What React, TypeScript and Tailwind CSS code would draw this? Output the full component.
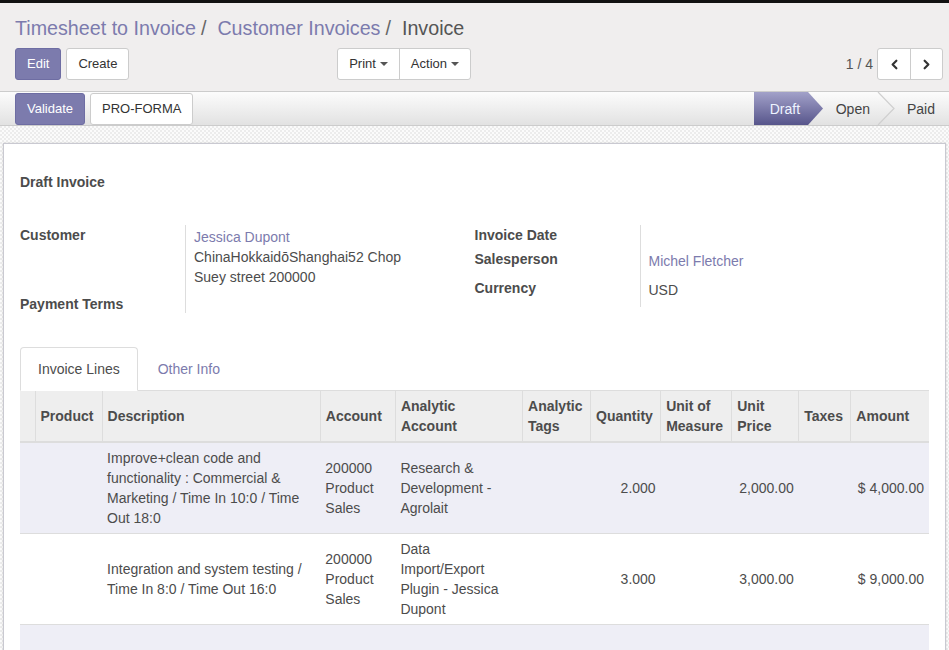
import React from 'react';
import { ChevronLeft, ChevronRight } from 'lucide-react';

interface Line {
  product: string;
  description: string;
  account: string;
  analytic: string;
  tags: string;
  quantity: string;
  uom: string;
  price: string;
  taxes: string;
  amount: string;
}

const lines: Line[] = [
  {
    product: '',
    description: 'Improve+clean code and functionality : Commercial & Marketing / Time In 10:0 / Time Out 18:0',
    account: '200000 Product Sales',
    analytic: 'Research & Development - Agrolait',
    tags: '',
    quantity: '2.000',
    uom: '',
    price: '2,000.00',
    taxes: '',
    amount: '$ 4,000.00',
  },
  {
    product: '',
    description: 'Integration and system testing / Time In 8:0 / Time Out 16:0',
    account: '200000 Product Sales',
    analytic: 'Data Import/Export Plugin - Jessica Dupont',
    tags: '',
    quantity: '3.000',
    uom: '',
    price: '3,000.00',
    taxes: '',
    amount: '$ 9,000.00',
  },
];

const Caret = () => (
  <span className="inline-block ml-[4px] w-0 h-0 border-x-[4px] border-x-transparent border-t-[4px] border-t-[#555] align-middle" />
);

const App: React.FC = () => {
  return (
    <div className="min-h-screen w-[949px] font-['Liberation_Sans',Arial,sans-serif] text-[14px] leading-5 text-[#4c4c4c] bg-[image:repeating-conic-gradient(#ececec_0_25%,#fbfbfb_0_50%)] bg-[length:4px_4px]">
      <div className="h-[3px] bg-[#111]" />

      {/* control panel */}
      <div className="bg-[#f0eeee] border-b border-[#ccc] pl-[15px] pr-[6px] pt-[11px] pb-[11px]">
        <div className="h-[28px] leading-[28px] text-[19.7px] whitespace-nowrap">
          <span className="text-[#7c7bad]">Timesheet to Invoice</span>
          <span className="pl-[5px] pr-[11px] text-[#666]">/</span>
          <span className="text-[#7c7bad]">Customer Invoices</span>
          <span className="pl-[5px] pr-[11px] text-[#666]">/</span>
          <span className="text-[#555]">Invoice</span>
        </div>
        <div className="mt-[6px] flex h-[32px] text-[13px]">
          <div className="flex w-[456px]">
            <button className="h-[32px] px-[11px] rounded-[3px] border border-[#6e6da3] bg-[#7c7bad] text-white">Edit</button>
            <button className="ml-[5px] h-[32px] px-[11px] rounded-[3px] border border-[#ccc] bg-white text-[#333]">Create</button>
            <div className="ml-auto flex rounded-[3px] border border-[#ccc] bg-white text-[#333]">
              <button className="h-[30px] px-[11px] flex items-center">Print<Caret /></button>
              <button className="h-[30px] px-[11px] flex items-center border-l border-[#ccc]">Action<Caret /></button>
            </div>
          </div>
          <div className="flex flex-1 items-center justify-end">
            <span className="text-[14px] text-[#555] mr-[4px]">1 / 4</span>
            <div className="flex rounded-[3px] border border-[#ccc] bg-white h-[32px]">
              <button className="w-[32px] flex items-center justify-center text-[#333]">
                <ChevronLeft size={15} strokeWidth={3.5} />
              </button>
              <button className="w-[32px] flex items-center justify-center border-l border-[#ccc] text-[#333]">
                <ChevronRight size={15} strokeWidth={3.5} />
              </button>
            </div>
          </div>
        </div>
      </div>

      {/* status bar */}
      <div className="flex h-[34px] items-center border-b border-[#ccc] bg-linear-to-b from-[#fcfcfc] to-[#e2e2e2] pl-[15px] text-[13px]">
        <button className="h-[32px] px-[11px] rounded-[3px] border border-[#6e6da3] bg-[#7c7bad] text-white">Validate</button>
        <button className="ml-[5px] h-[32px] px-[11px] rounded-[3px] border border-[#ccc] bg-white text-[#333]">PRO-FORMA</button>
        <div className="ml-auto flex h-full items-center text-[14px]">
          <div className="relative h-full w-[69px] flex items-center pl-[16px]">
            <svg className="absolute inset-0" width="69" height="33" viewBox="0 0 69 33">
              <defs>
                <linearGradient id="draftGrad" x1="0" y1="0" x2="0" y2="1">
                  <stop offset="0" stopColor="#a2a1c9" />
                  <stop offset="1" stopColor="#57558b" />
                </linearGradient>
              </defs>
              <polygon points="0,0 54,0 69,16.5 54,33 0,33" fill="url(#draftGrad)" />
            </svg>
            <span className="relative text-[#eef3ff]">Draft</span>
          </div>
          <span className="ml-[13px] text-[#444]">Open</span>
          <svg className="ml-[7px]" width="18" height="33" viewBox="0 0 18 33">
            <polyline points="1,0 17,16.5 1,33" fill="none" stroke="#cfcfcf" strokeWidth="1.2" />
          </svg>
          <span className="ml-[12px] mr-[14px] text-[#444]">Paid</span>
        </div>
      </div>

      {/* sheet */}
      <div className="mx-[3px] mt-[17px] border border-[#c9c9d1] bg-white px-4 pt-[28px] pb-10 shadow-[0_0_2px_rgba(0,0,0,0.15)]">
        <div className="font-bold">Draft Invoice</div>

        <div className="mt-[33px] grid grid-cols-2">
          <div className="flex">
            <div className="flex h-[89px] w-[165px] flex-col justify-between font-bold">
              <div>Customer</div>
              <div>Payment Terms</div>
            </div>
            <div className="h-[88px] border-l border-[#ddd] pl-2 pt-[2px]">
              <div className="text-[#7c7bad]">Jessica Dupont</div>
              <div>ChinaHokkaidōShanghai52 Chop</div>
              <div>Suey street 200000</div>
            </div>
          </div>
          <div className="flex">
            <div className="w-[165px] font-bold">
              <div className="h-[24px]">Invoice Date</div>
              <div className="h-[29px]">Salesperson</div>
              <div className="h-[29px]">Currency</div>
            </div>
            <div className="h-[82px] border-l border-[#ddd] pl-2 pt-[2px]">
              <div className="h-[24px]" />
              <div className="h-[29px] text-[#7c7bad]">Michel Fletcher</div>
              <div className="h-[29px]">USD</div>
            </div>
          </div>
        </div>

        {/* tabs */}
        <div className="mt-[33px] flex border-b border-[#ddd]">
          <div className="-mb-px rounded-t-[4px] border border-[#ddd] border-b-white bg-white px-[17px] pt-[11px] pb-[11px]">Invoice Lines</div>
          <div className="ml-[2px] px-[18px] pt-[12px] pb-[11px] text-[#7c7bad]">Other Info</div>
        </div>

        <table className="w-full table-fixed border-collapse">
          <colgroup>
            <col className="w-[15px]" />
            <col className="w-[67px]" />
            <col className="w-[218px]" />
            <col className="w-[75px]" />
            <col className="w-[127px]" />
            <col className="w-[68px]" />
            <col className="w-[70px]" />
            <col className="w-[71px]" />
            <col className="w-[67px]" />
            <col className="w-[52px]" />
            <col className="w-[78px]" />
          </colgroup>
          <thead>
            <tr className="bg-[#eeeeee] border-b-2 border-[#dddddd] font-bold text-left">
              <th className="px-[5px] py-[5px]"></th>
              <th className="border-l border-[#dddddd] px-[5px] py-[5px] text-left align-middle">Product</th>
              <th className="border-l border-[#dddddd] px-[5px] py-[5px] text-left align-middle">Description</th>
              <th className="border-l border-[#dddddd] px-[5px] py-[5px] text-left align-middle">Account</th>
              <th className="border-l border-[#dddddd] px-[5px] py-[5px] text-left align-middle">Analytic<br />Account</th>
              <th className="border-l border-[#dddddd] px-[5px] py-[5px] text-left align-middle">Analytic<br />Tags</th>
              <th className="border-l border-[#dddddd] px-[5px] py-[5px] text-left align-middle">Quantity</th>
              <th className="border-l border-[#dddddd] px-[5px] py-[5px] text-left align-middle">Unit of<br />Measure</th>
              <th className="border-l border-[#dddddd] px-[5px] py-[5px] text-left align-middle">Unit<br />Price</th>
              <th className="border-l border-[#dddddd] px-[5px] py-[5px] text-left align-middle">Taxes</th>
              <th className="border-l border-[#dddddd] px-[5px] py-[5px] text-left align-middle">Amount</th>
            </tr>
          </thead>
          <tbody>
            {lines.map((l, i) => (
              <tr key={i} className={`border-b border-[#dddddd] ${i % 2 === 0 ? 'bg-[#eeeef6]' : 'bg-white'}`}>
                <td className="px-[5px] py-[5px]"></td>
                <td className="px-[5px] py-[5px] align-middle">{l.product}</td>
                <td className="px-[5px] py-[5px] align-middle">{l.description}</td>
                <td className="px-[5px] py-[5px] align-middle">{l.account}</td>
                <td className="px-[5px] py-[5px] align-middle">{l.analytic}</td>
                <td className="px-[5px] py-[5px] align-middle">{l.tags}</td>
                <td className="px-[5px] py-[5px] align-middle text-right">{l.quantity}</td>
                <td className="px-[5px] py-[5px] align-middle">{l.uom}</td>
                <td className="px-[5px] py-[5px] align-middle text-right">{l.price}</td>
                <td className="px-[5px] py-[5px] align-middle">{l.taxes}</td>
                <td className="px-[5px] py-[5px] align-middle text-right">{l.amount}</td>
              </tr>
            ))}
            <tr className="bg-[#eeeef6] h-[40px]">
              <td colSpan={11}></td>
            </tr>
          </tbody>
        </table>
      </div>
    </div>
  );
};

export default App;
